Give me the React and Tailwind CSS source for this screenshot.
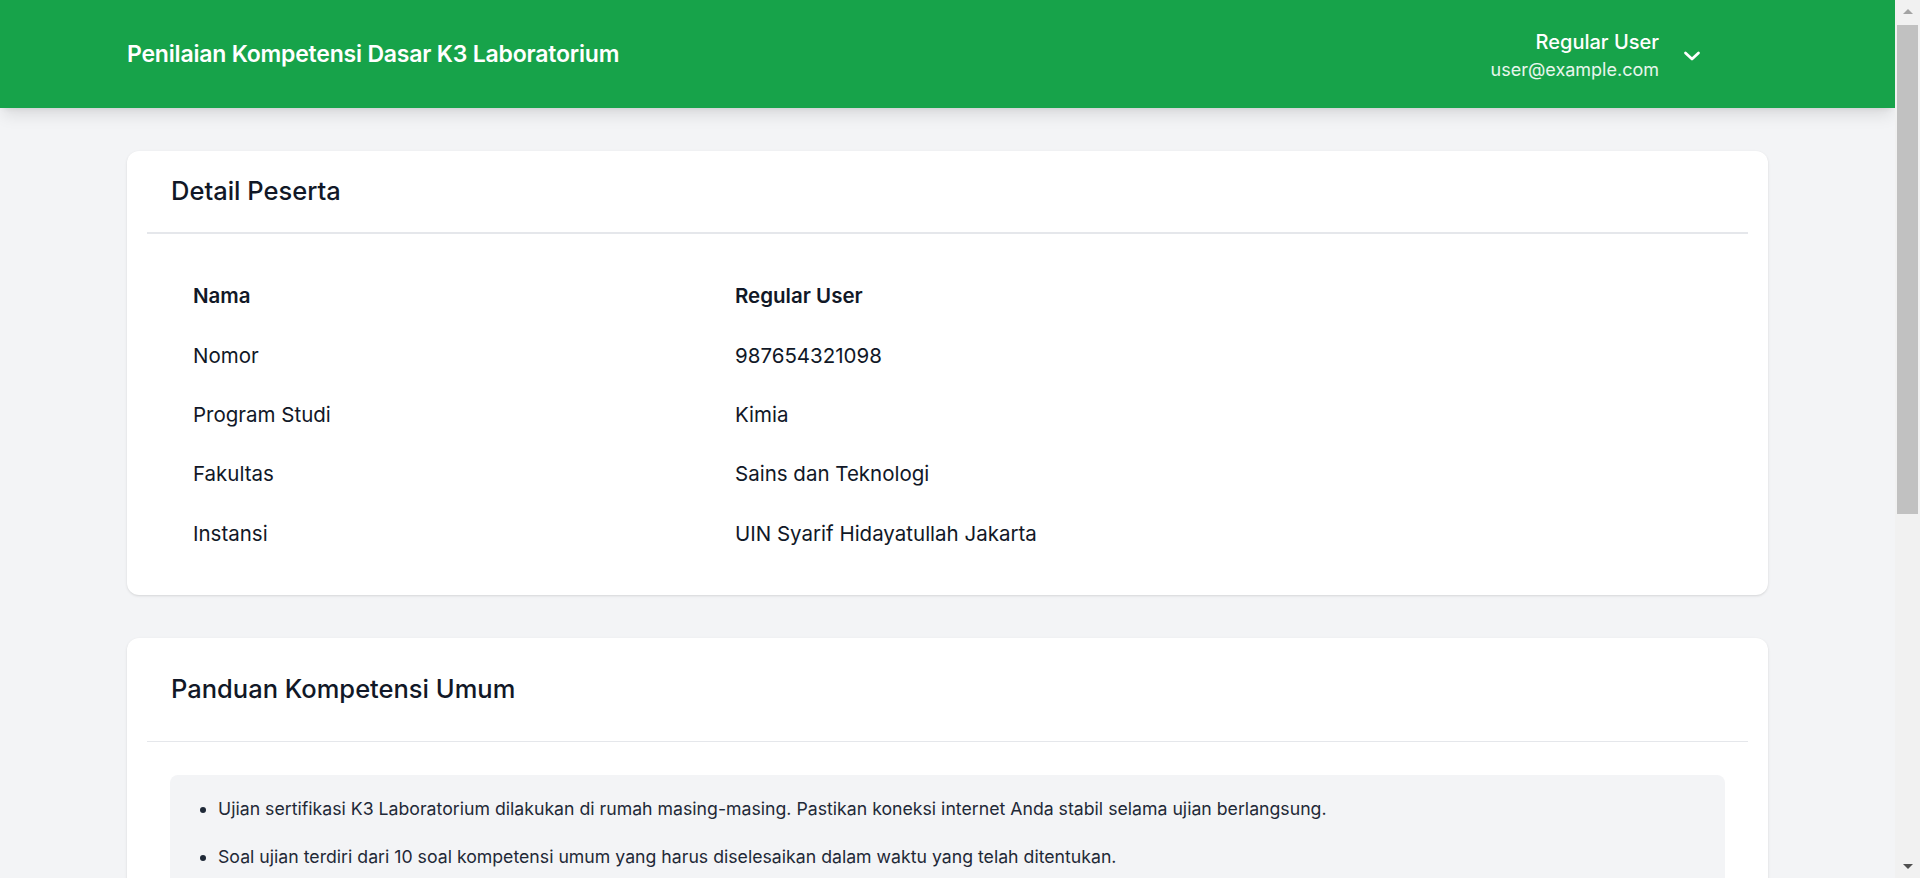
import React from "react";

const peserta = [
  { label: "Nama", value: "Regular User", bold: true },
  { label: "Nomor", value: "987654321098" },
  { label: "Program Studi", value: "Kimia" },
  { label: "Fakultas", value: "Sains dan Teknologi" },
  { label: "Instansi", value: "UIN Syarif Hidayatullah Jakarta" },
];

const panduan = [
  "Ujian sertifikasi K3 Laboratorium dilakukan di rumah masing-masing. Pastikan koneksi internet Anda stabil selama ujian berlangsung.",
  "Soal ujian terdiri dari 10 soal kompetensi umum yang harus diselesaikan dalam waktu yang telah ditentukan.",
  "Setiap soal memiliki satu jawaban yang benar. Pilih jawaban yang paling tepat.",
  "Waktu pengerjaan akan berjalan otomatis setelah Anda menekan tombol mulai.",
  "Jawaban yang sudah dikirim tidak dapat diubah kembali.",
];

// window scrollbar as it shows in the screenshot
const Scrollbar = () => (
  <div className="w-[25px] shrink-0 bg-[#f1f1f1] flex flex-col items-center">
    <div className="h-[25px] flex items-center justify-center pb-[3px]">
      <div className="w-0 h-0 border-x-[5px] border-x-transparent border-b-[5px] border-b-[#a3a3a3]" />
    </div>
    <div className="w-[21px] h-[489px] bg-[#c1c1c1]" />
    <div className="flex-1" />
    <div className="h-[25px] flex items-center justify-center pt-[2px]">
      <div className="w-0 h-0 border-x-[5px] border-x-transparent border-t-[5px] border-t-[#505050]" />
    </div>
  </div>
);

const App = () => {
  return (
    <div
      className="h-screen flex overflow-hidden bg-[#f3f4f6] text-[#111827]"
      style={{ fontFamily: "Inter, 'Noto Sans', sans-serif" }}>
      <div className="flex-1 min-w-0 overflow-hidden">
        <header className="h-[108px] bg-[#17a34a] shadow-lg flex items-center justify-between pl-[127px] pr-[194px]">
          <h1 className="text-[23px] font-semibold text-white tracking-[-0.2px]">
            Penilaian Kompetensi Dasar K3 Laboratorium
          </h1>
          <button className="flex items-center gap-[24px] text-white pt-[4px]">
            <div className="text-right">
              <div className="text-[20px] font-medium leading-[27px]">Regular User</div>
              <div className="text-[18px] leading-[27px] text-white/90">user@example.com</div>
            </div>
            <svg
              xmlns="http://www.w3.org/2000/svg"
              width="18"
              height="12"
              viewBox="0 0 18 12"
              fill="none"
              stroke="currentColor"
              strokeWidth={2.75}
              strokeLinecap="round"
              strokeLinejoin="round">
              <path d="M2.5 3l6.5 6 6.5-6" />
            </svg>
          </button>
        </header>

        <main className="px-[127px] pt-[43px] pb-12 flex flex-col gap-[43px]">
          {/* detail peserta */}
          <section className="bg-white rounded-xl shadow-sm px-5">
            <div className="h-[83px] flex items-center px-6 border-b-2 border-[#e5e7eb]">
              <h2 className="text-[25.5px] font-medium text-[#111827]">Detail Peserta</h2>
            </div>
            <div className="pl-[46px] pt-[33px] pb-[31px]">
              {peserta.map((row) => (
                <div key={row.label} className="flex items-center h-[59.4px] text-[20.5px]">
                  <div
                    className={
                      "w-[542px] " + (row.bold ? "font-semibold" : "font-normal")
                    }>
                    {row.label}
                  </div>
                  <div className={row.bold ? "font-semibold" : "font-normal"}>
                    {row.value}
                  </div>
                </div>
              ))}
            </div>
          </section>

          {/* panduan */}
          <section className="bg-white rounded-xl shadow-sm px-5 pb-8">
            <div className="h-[104px] flex items-center px-6 border-b border-[#e5e7eb]">
              <h2 className="text-[25.5px] font-medium text-[#111827]">
                Panduan Kompetensi Umum
              </h2>
            </div>
            <div className="mx-[23px] mt-[33px] bg-[#f3f4f6] rounded-lg p-6 pt-[21px]">
              <ul className="list-disc pl-6 flex flex-col gap-[22px] text-[17.7px] leading-[26px] text-[#1f2937]">
                {panduan.map((item) => (
                  <li key={item}>{item}</li>
                ))}
              </ul>
            </div>
          </section>
        </main>
      </div>
      <Scrollbar />
    </div>
  );
};

export default App;
